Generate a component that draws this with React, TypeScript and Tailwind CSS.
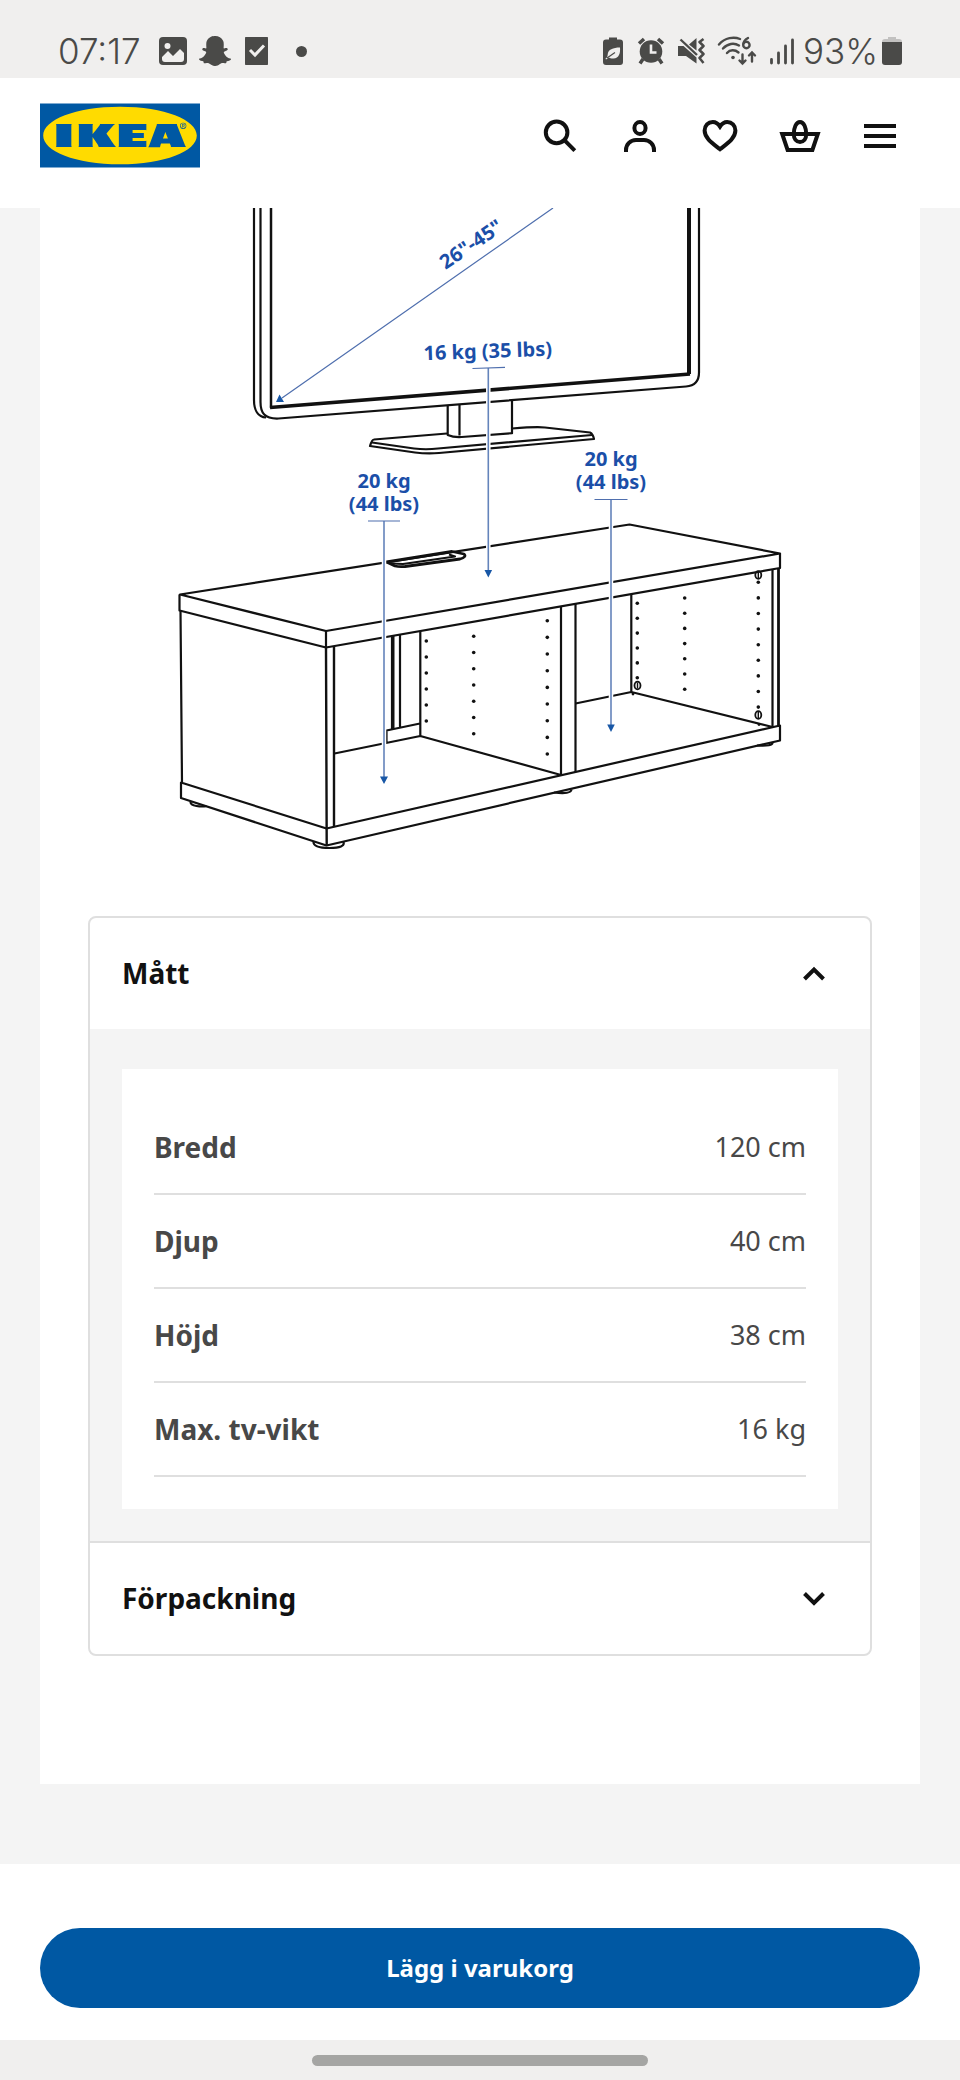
import { useState, type ReactNode } from "react";
import { FaSnapchatGhost } from "react-icons/fa";
import { SiIkea } from "react-icons/si";

const measurements = [
  { label: "Bredd", value: "120 cm" },
  { label: "Djup", value: "40 cm" },
  { label: "Höjd", value: "38 cm" },
  { label: "Max. tv-vikt", value: "16 kg" },
];

function StatusBar() {
  return (
    <div className="flex h-[78px] items-center justify-between bg-[#f0efee] pt-6 pr-[58px] pl-[58px] font-['Inter',sans-serif] text-[35px] leading-none font-light text-[#4a4a48]">
      <div className="flex items-center gap-3">
        <span className="mr-[6px]">07:17</span>
        <svg className="size-7" viewBox="0 0 28 28" aria-hidden="true">
          <rect width="28" height="28" rx="4" fill="currentColor" />
          <circle cx="8.5" cy="9" r="3" fill="#f0efee" />
          <path d="M3 20l6-6 5 5 7-7 4 4v6a3 3 0 0 1-3 3H6a3 3 0 0 1-3-3z" fill="#f0efee" />
        </svg>
        <FaSnapchatGhost className="size-8" aria-hidden="true" />
        <svg className="size-7" viewBox="0 0 28 28" aria-hidden="true">
          <rect x="2" y="-1" width="23" height="30" rx="2.5" fill="currentColor" />
          <path d="M7 13l5 5 9-9.5" fill="none" stroke="#f0efee" strokeWidth="3" />
        </svg>
        <svg className="ml-3 size-7" viewBox="0 0 28 28" aria-hidden="true">
          <circle cx="6.5" cy="14.5" r="5.5" fill="currentColor" />
        </svg>
      </div>
      <div className="flex items-center gap-3">
        <svg className="size-7" viewBox="0 0 28 28" aria-hidden="true">
          <path d="M12 .5h8v2h3a3 3 0 0 1 3 3V25a3 3 0 0 1-3 3H9a3 3 0 0 1-3-3V5.500a3 3 0 0 1 3-3h3z" fill="currentColor" />
          <path d="M8.500 21.500c1.500-.7 2-1.700 2.200-4C11 12.500 16 10.500 23 10.500c.5 6-1 10.500-6.500 11-2 .2-3.500-.3-4.500-1l-3 2z" fill="#f0efee" />
          <path d="M10 21l8-5.500" stroke="currentColor" strokeWidth="1.200" />
        </svg>
        <svg className="size-7" viewBox="0 0 28 28" aria-hidden="true">
          <circle cx="14" cy="14.500" r="11.300" fill="currentColor" />
          <path d="M2 6.500L7 2M26 6.500L21 2" stroke="currentColor" strokeWidth="3.500" />
          <path d="M6 22l-3 4.500M22 22l3 4.500" stroke="currentColor" strokeWidth="3.500" />
          <path d="M14 7.500v8h5.500" fill="none" stroke="#f0efee" strokeWidth="2.600" />
        </svg>
        <svg className="size-7" viewBox="0 0 28 28" aria-hidden="true">
          <path d="M12 7.500L19.500 1v12.500zM1 9h5.500L19.500 20.500V26.500L9 19H1z" fill="currentColor" />
          <path d="M3.500 2.500L20 18" stroke="currentColor" strokeWidth="2.400" />
          <path d="M26.500 2l-4 3 4 4-4 4 4 4-4 4 4 5" fill="none" stroke="currentColor" strokeWidth="2.500" strokeLinejoin="round" />
        </svg>
        <svg className="h-[30px] w-10" viewBox="0 0 40 30" aria-hidden="true">
          <g fill="none" stroke="currentColor" strokeWidth="2.400" strokeLinecap="round">
            <path d="M2 8.500C8 1.500 17 .5 23 3" />
            <path d="M6 12.500c4.500-5 11-6 16-3" />
            <path d="M10 17c3-3.500 8-3.500 11.500-.5" />
            <path d="M31 2c-3 1.500-4.800 4-4.800 7a3.200 3.200 0 1 0 3.200-3.200c-1.400 0-2.600 1-3 2.200" />
            <path d="M25.500 18.500v9m-3-3l3 3 3-3M35 25.500v-9M32 19.500l3-3 3 3" />
          </g>
          <circle cx="16" cy="21.500" r="1.800" fill="currentColor" />
        </svg>
        <div className="flex items-center gap-2">
          <svg className="h-7 w-[26px]" viewBox="0 0 26 28" aria-hidden="true">
            <path d="M2.500 22.500v3.500M9.500 16v10M16.500 9v17M23.500 3v23" stroke="currentColor" strokeWidth="2.800" strokeLinecap="round" />
          </svg>
          <span className="flex items-center gap-1">
            93%
            <svg className="h-7 w-5" viewBox="0 0 20 28" aria-hidden="true">
              <path d="M6 0h8v2h3a3 3 0 0 1 3 3v3H0V5a3 3 0 0 1 3-3h3z" fill="#c2c1c0" />
              <path d="M0 5h20v20a3 3 0 0 1-3 3H3a3 3 0 0 1-3-3z" fill="currentColor" />
            </svg>
          </span>
        </div>
      </div>
    </div>
  );
}

function HeaderButton({ label, children }: { label: string; children: ReactNode }) {
  return (
    <button type="button" aria-label={label} className="flex size-20 items-center justify-center text-[#111]">
      <svg className="size-12" viewBox="0 0 24 24" fill="none" stroke="currentColor" strokeWidth="2" aria-hidden="true">
        {children}
      </svg>
    </button>
  );
}

function Header() {
  return (
    <header className="flex h-[130px] items-center justify-between bg-white px-10 pb-[15px]">
      <a href="#" aria-label="IKEA">
        <svg className="h-[65px] w-40" viewBox="0 0 160 65" aria-hidden="true">
          <rect x="1" y="1" width="158" height="63" fill="#ffdb00" />
          <SiIkea x="0" y="-47.500" size={160} color="#0058a3" />
        </svg>
      </a>
      <nav className="flex">
        <HeaderButton label="Sök">
          <circle cx="10.300" cy="10.200" r="5.400" />
          <path d="M14.200 14.100l5.200 5.200" />
        </HeaderButton>
        <HeaderButton label="Profil">
          <ellipse cx="12" cy="8" rx="2.800" ry="3" />
          <path d="M5 20v-1a5 5 0 0 1 5-5h4a5 5 0 0 1 5 5v1" />
        </HeaderButton>
        <HeaderButton label="Favoriter">
          <path d="M12 7.300C11 5.700 9.800 5 8.400 5 6.100 5 4.300 6.800 4.300 9.300c0 3.900 4.300 6.600 7.700 9.300 3.400-2.700 7.700-5.400 7.700-9.300C19.700 6.800 17.900 5 15.600 5c-1.400 0-2.600.7-3.600 2.300z" />
        </HeaderButton>
        <HeaderButton label="Varukorg">
          <path d="M3.100 11h17.800l-2.700 8H5.800z" />
          <path d="M12 5c-2 0-3.100 3-3.100 6 0 2.500 1.200 4 3.100 4s3.100-1.500 3.100-4c0-3-1.100-6-3.100-6z" />
        </HeaderButton>
        <HeaderButton label="Meny">
          <path d="M4 7h16M4 12h16M4 17h16" />
        </HeaderButton>
      </nav>
    </header>
  );
}

const holes = [
  { x: 426.3, y: 641, step: 16, count: 6 },
  { x: 473.7, y: 636.3, step: 16.25, count: 7 },
  { x: 547.3, y: 620.7, step: 16.67, count: 9 },
  { x: 637.3, y: 603.3, step: 14.9, count: 6 },
  { x: 684.7, y: 598, step: 15.2, count: 7 },
  { x: 758.3, y: 582.3, step: 15.6, count: 9 },
];

function ProductDrawing() {
  return (
    <svg
      className="block w-full"
      viewBox="40 208 880 660"
      role="img"
      aria-label="Måttskiss av tv-bänk"
      fill="none"
      stroke="#111"
      strokeWidth="2.200"
      strokeLinejoin="round"
    >
      <g>
        <path d="M254 200v200c0 10 4 17 12 17.500" />
        <path d="M260.500 200v202c0 11 4 17 18 16.500L686 386.500q13-1 13-14V200" />
        <path d="M271 200v208" strokeWidth="2.500" />
        <path d="M270 407.500L690 374" strokeWidth="3.600" />
        <path d="M689 374V200" strokeWidth="4" />
        <path d="M447.700 405.500V435q6 2.500 14 2l50.300-3.800V400.500M459.500 405v30.500" />
        <path d="M447 433.500L374 439.500q-2 0-4 6.500l45 6.500q12 1.500 24 .5L594 439q-1-5-4-6.500l-45-5q-8-1-33 1" />
        <path d="M372 442.500l42 6q12 1.500 24 0L592 435" />
      </g>
      <g>
        <path d="M180 594.500L629.500 524.500 780 553.500 326 631z" />
        <path d="M179.500 594.500v16L326 647.500 780 568v-14.500M326 631V647.500" />
        <path d="M180.500 610.500L182 782.500M181 798V782.500L326.500 828.500 780 725.500v15L326.500 845.500z" />
        <path d="M326 647l.7 198.500M334 646.500V827" strokeWidth="2.400" />
        <path d="M561 606.500V775M575.500 603.500V772M772.500 569v157.500" />
        <path d="M778.500 568v158" strokeWidth="2.800" />
        <path d="M392.700 636v93" strokeWidth="3.600" />
        <path d="M400 635v93M420.300 631.500V736M420 723.500l-33.500 7V743M334.500 753.500L420.300 736 561 775" />
        <path d="M631.300 595v97M575.500 703.500l55.800-11.500 141.200 35" />
        <path d="M386.500 562l65.500-10.500 12 2.500q3 3-4 5l-55 7.500q-6 .5-10-.5z" strokeWidth="2.800" />
        <path d="M391 563.500l12 .5 52-7.500-6-2" />
        <path d="M190.500 802q0 3 6 4t10 0M313.500 842q0 6 16 6t14-6M554 792.500q17 2 17.500-3M757 745.500q16 1 15.500-3" />
        {[
          [637.5, 685.5],
          [758.3, 715],
          [758.3, 575],
        ].map(([x, y]) => (
          <g key={`${x}-${y}`}>
            <ellipse cx={x} cy={y} rx="3" ry="3.800" strokeWidth="1.800" />
            <path d={`M${x} ${y - 3}v6`} strokeWidth="1.400" />
          </g>
        ))}
        <g fill="#111" stroke="none">
          {holes.flatMap(({ x, y, step, count }) =>
            Array.from({ length: count }, (_, i) => <circle key={`${x}-${i}`} cx={x} cy={y + i * step} r="1.800" />),
          )}
          <circle cx="633" cy="694" r="1.400" />
          <circle cx="759" cy="724.500" r="1.400" />
        </g>
      </g>
      <path d="M384 521v256M488.300 368v202M611 500v226" stroke="#fff" strokeWidth="4.500" />
      <path d="M384 521v256M488.300 368v202M611 500v226" stroke="#6484bb" strokeWidth="1.600" />
      <path d="M368 521h32M472.500 368.500l32.500-1.200M594.500 499.500h33M282 398L553 208" stroke="#4f6fae" strokeWidth="1.200" />
      <path
        d="M380 776.500h8l-4 7.500zM484.500 570h7.600l-3.800 7.500zM607.200 724.500h7.600l-3.800 7.500zM276 402l3.500-7.500 4.500 7.500z"
        fill="#1857a6"
        stroke="none"
      />
      <g
        className="font-['Noto_Sans',sans-serif] text-[20px] font-bold"
        fill="#1b4fa8"
        stroke="none"
        textAnchor="middle"
      >
        <text transform="translate(475 250) rotate(-34)">26"-45"</text>
        <text transform="translate(488 358) rotate(-2)">16 kg (35 lbs)</text>
        <text x="384" y="488">20 kg</text>
        <text x="384" y="511">(44 lbs)</text>
        <text x="611" y="466">20 kg</text>
        <text x="611" y="489">(44 lbs)</text>
      </g>
    </svg>
  );
}

function AccordionHeader({ title, open, onToggle }: { title: string; open: boolean; onToggle: () => void }) {
  return (
    <h2>
      <button
        type="button"
        aria-expanded={open}
        onClick={onToggle}
        className="flex h-[111px] w-full items-center justify-between px-8 pb-[2px] text-left text-[28px] font-bold text-[#111]"
      >
        {title}
        <svg className="size-12" viewBox="0 0 48 48" fill="none" stroke="currentColor" strokeWidth="4" aria-hidden="true">
          <path d={open ? "M14.500 30L24 20.500l9.500 9.500" : "M14.500 19.500L24 29l9.500-9.500"} />
        </svg>
      </button>
    </h2>
  );
}

export default function App() {
  const [sizeOpen, setSizeOpen] = useState(true);
  const [packOpen, setPackOpen] = useState(false);

  return (
    <div className="flex min-h-screen flex-col bg-white font-['Noto_Sans',sans-serif]">
      <StatusBar />
      <Header />
      <main className="grow bg-[#f4f4f4] px-10 pb-20">
        <div className="h-full bg-white pb-32">
          <ProductDrawing />
          <div className="mx-12 mt-12 overflow-hidden rounded-lg border-2 border-[#dfdfdf]">
            <AccordionHeader title="Mått" open={sizeOpen} onToggle={() => setSizeOpen(!sizeOpen)} />
            {sizeOpen && (
              <div className="bg-[#f4f4f4] px-8 pt-10 pb-8">
                <div className="bg-white p-8">
                  <table className="w-full border-separate border-spacing-0 text-[#484848]">
                    <tbody>
                      {measurements.map(({ label, value }) => (
                        <tr key={label} className="h-[94px]">
                          <th scope="row" className="border-b-2 border-[#dfdfdf] p-0 text-left text-[28px] font-bold">
                            {label}
                          </th>
                          <td className="border-b-2 border-[#dfdfdf] p-0 text-right text-[27px]">{value}</td>
                        </tr>
                      ))}
                    </tbody>
                  </table>
                </div>
              </div>
            )}
            <div className="border-t-2 border-[#dfdfdf]">
              <AccordionHeader title="Förpackning" open={packOpen} onToggle={() => setPackOpen(!packOpen)} />
            </div>
          </div>
        </div>
      </main>
      <div className="bg-white px-10 pt-16 pb-8">
        <button type="button" className="h-20 w-full rounded-full bg-[#0058a3] text-2xl font-bold text-white">
          Lägg i varukorg
        </button>
      </div>
      <div className="flex h-10 items-center justify-center bg-[#f0efee]">
        <div className="h-[11px] w-[35%] rounded-full bg-[#a5a5a3]" />
      </div>
    </div>
  );
}
